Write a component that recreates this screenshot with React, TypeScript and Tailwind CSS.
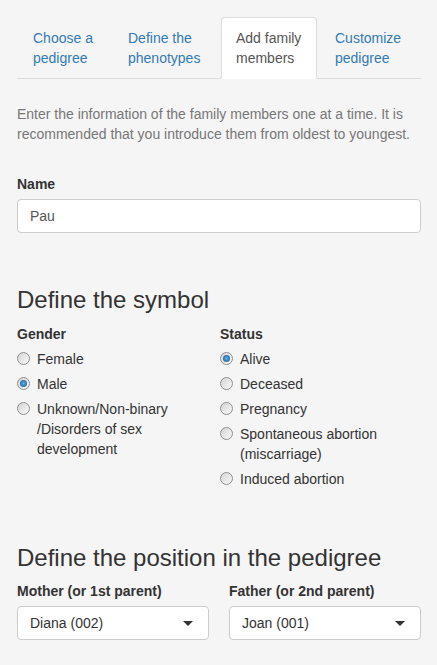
import React from "react";

function Radio({ checked, children }: { checked?: boolean; children: React.ReactNode }) {
  return (
    <div className="flex items-start leading-5">
      <span className="mt-[3px] flex h-[13px] w-[13px] shrink-0 items-center justify-center rounded-full border border-[#8f8f8f] bg-linear-to-br from-[#d4d4d4] to-[#fafafa]">
        {checked && (
          <span className="h-[7px] w-[7px] rounded-full bg-radial from-[#5fb3e6] to-[#0a4f8a]" />
        )}
      </span>
      <span className="ml-[7px]">{children}</span>
    </div>
  );
}

function Select({ value }: { value: string }) {
  return (
    <div className="flex h-[34px] items-center justify-between rounded-[4px] border border-[#ccc] bg-white pl-[12px] pr-[15px] text-[#333]">
      <span>{value}</span>
      <span className="h-0 w-0 border-x-[5px] border-t-[5px] border-x-transparent border-t-[#333]" />
    </div>
  );
}

export default function App() {
  const tabs: [string, string, string][] = [
    ["Choose a", "pedigree", "w-[93px]"],
    ["Define the", "phenotypes", "w-[107px]"],
    ["Add family", "members", "w-[96px]"],
    ["Customize", "pedigree", "w-[96px]"],
  ];
  return (
    <div
      className="min-h-[665px] bg-[#f5f5f5] pl-[17px] pr-[16px] pt-[17px] text-[14px] leading-5 text-[#333]"
      style={{ fontFamily: '"Liberation Sans", Arial, sans-serif' }}
    >
      <ul className="flex border-b border-[#ddd]">
        {tabs.map((t, i) => (
          <li key={i} className={"-mb-px mr-[2px] " + t[2]}>
            <a
              className={
                i === 2
                  ? "block rounded-t-[4px] border border-[#ddd] border-b-transparent bg-white py-[10px] pl-[14px] pr-[4px] text-[#555]"
                  : "block rounded-t-[4px] border border-transparent py-[10px] pl-[15px] pr-[4px] text-[#337ab7]"
              }
            >
              {t[0]}
              <br />
              {t[1]}
            </a>
          </li>
        ))}
      </ul>

      <p className="mt-[25px] text-[#777]">
        Enter the information of the family members one at a time. It is recommended that you introduce them from oldest to youngest.
      </p>

      <div className="mt-[30px]">
        <label className="mb-[5px] block font-bold">Name</label>
        <div className="flex h-[34px] items-center rounded-[4px] border border-[#ccc] bg-white px-[12px] text-[#555]">
          Pau
        </div>
      </div>

      <h3 className="mt-[54px] text-[24px] leading-[26px] text-[#333]">Define the symbol</h3>
      <div className="mt-[11px] flex">
        <div className="w-[203px]">
          <div className="mb-[5px] font-bold">Gender</div>
          <div className="flex flex-col gap-[5px]">
            <Radio>Female</Radio>
            <Radio checked>Male</Radio>
            <Radio>
              Unknown/Non-binary
              <br />
              /Disorders of sex
              <br />
              development
            </Radio>
          </div>
        </div>
        <div className="flex-1">
          <div className="mb-[5px] font-bold">Status</div>
          <div className="flex flex-col gap-[5px]">
            <Radio checked>Alive</Radio>
            <Radio>Deceased</Radio>
            <Radio>Pregnancy</Radio>
            <Radio>
              Spontaneous abortion
              <br />
              (miscarriage)
            </Radio>
            <Radio>Induced abortion</Radio>
          </div>
        </div>
      </div>

      <h3 className="mt-[56px] text-[24px] leading-[26px] text-[#333]">Define the position in the pedigree</h3>
      <div className="mt-[10px] grid grid-cols-[192px_192px] gap-x-[20px]">
        <div>
          <div className="mb-[5px] font-bold">Mother (or 1st parent)</div>
          <Select value="Diana (002)" />
        </div>
        <div>
          <div className="mb-[5px] font-bold">Father (or 2nd parent)</div>
          <Select value="Joan (001)" />
        </div>
      </div>
    </div>
  );
}
